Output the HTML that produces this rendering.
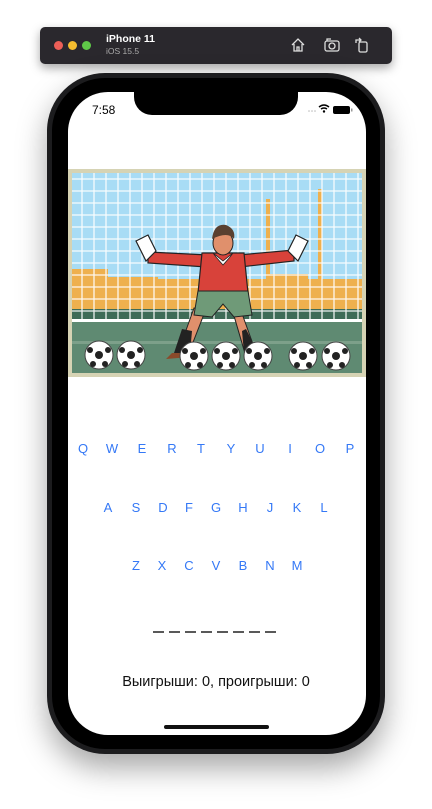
<!DOCTYPE html>
<html><head><meta charset="utf-8"><style>
html,body{margin:0;padding:0;width:432px;height:809px;background:#fff;overflow:hidden;font-family:"Liberation Sans",sans-serif;position:relative}
.tb{position:absolute;left:40px;top:27px;width:352px;height:37px;background:#2a282d;border-radius:5px;box-shadow:0 4px 10px rgba(0,0,0,.35)}
.dot{position:absolute;top:14px;width:9px;height:9px;border-radius:50%}
.phone{position:absolute;left:47px;top:73px;width:338px;height:681px;background:#1c1c1e;border-radius:58px;box-shadow:0 14px 30px rgba(0,0,0,.35)}
.inner{position:absolute;left:5px;top:5px;right:5px;bottom:5px;background:#000;border-radius:53px}
.screen{position:absolute;left:68px;top:92px;width:298px;height:643px;background:#fff;border-radius:40px;overflow:hidden}
.notch{position:absolute;left:134px;top:92px;width:164px;height:23px;background:#000;border-radius:0 0 18px 18px}
.k{position:absolute;color:#3478f6;font-size:13px;width:20px;text-align:center;margin-left:-10px}
</style></head><body>
<div class="tb">
<div class="dot" style="left:14px;background:#ec5f57"></div>
<div class="dot" style="left:28px;background:#f5bd2f"></div>
<div class="dot" style="left:42px;background:#5fc848"></div>
<div style="position:absolute;left:66px;top:6px;color:#fff;font-weight:bold;font-size:10.5px">iPhone 11</div>
<div style="position:absolute;left:66px;top:19px;color:#aaa;font-size:8.5px">iOS 15.5</div>
<svg style="position:absolute;left:250px;top:10px" width="90" height="16" viewBox="0 0 90 16" fill="none" stroke="#ddd" stroke-width="1.3">
<path d="M2 8 L8 2 L14 8 M4 7 V14 H12 V7 M7 14 V10 H9 V14"/>
<rect x="35" y="4" width="14" height="10" rx="2"/><circle cx="42" cy="9" r="3"/><path d="M37 4 V2 H41"/>
<rect x="69" y="5" width="8" height="10" rx="1.5"/><path d="M66 6 V3 H71 M69 1 L71 3 L69 5"/>
</svg>
</div>
<div class="phone"><div class="inner"></div></div>
<div class="screen">
<svg style="position:absolute;left:0;top:77px" width="298" height="208" viewBox="0 0 298 208">
<rect width="298" height="208" fill="#d6d3b4"/>
<rect x="4" y="4" width="290" height="200" fill="#a8dcf5"/>
<path d="M4 100 H40 V108 H90 V110 H200 V105 H240 V110 H294 V150 H4Z" fill="#eeb04e"/>
<rect x="198" y="30" width="4" height="80" fill="#eeb04e"/><rect x="250" y="20" width="4" height="90" fill="#eeb04e"/>
<rect x="4" y="140" width="290" height="12" fill="#3e6b57"/>
<rect x="4" y="150" width="290" height="54" fill="#5f8a72"/>
<rect x="4" y="150" width="290" height="3" fill="#fff"/>
<rect x="4" y="172" width="290" height="3" fill="#7da08a"/>
<g stroke="#fff" stroke-width="1.3" opacity=".9">
<path d="M4 10 H294 M4 22 H294 M4 34 H294 M4 46 H294 M4 58 H294 M4 70 H294 M4 82 H294 M4 94 H294 M4 106 H294 M4 118 H294 M4 130 H294 M4 142 H294"/>
<path d="M14 4V150 M26 4V150 M38 4V150 M50 4V150 M62 4V150 M74 4V150 M86 4V150 M98 4V150 M110 4V150 M122 4V150 M134 4V150 M146 4V150 M158 4V150 M170 4V150 M182 4V150 M194 4V150 M206 4V150 M218 4V150 M230 4V150 M242 4V150 M254 4V150 M266 4V150 M278 4V150 M290 4V150"/>
</g>
<path d="M126 139 L112 178 L122 181 L138 140Z M172 139 L186 178 L176 181 L164 140Z" fill="#e0906c" stroke="#222"/>
<path d="M114 160 L106 184 L122 184 L124 162Z M178 160 L190 184 L176 184 L174 162Z" fill="#222"/>
<path d="M104 184 L122 184 L122 188 L98 190Z M176 184 L194 184 L200 190 L176 188Z" fill="#8a4a2a"/>
<path d="M80 83 L140 86 L138 98 L80 94Z" fill="#d8423a" stroke="#222" stroke-width="1.2"/>
<path d="M226 81 L170 86 L172 98 L226 92Z" fill="#d8423a" stroke="#222" stroke-width="1.2"/>
<path d="M134 84 H176 L180 124 H130Z" fill="#d8423a" stroke="#222" stroke-width="1.2"/>
<path d="M145 84 L155 92 L165 84 L162 88 L155 96 L148 88Z" fill="#fff" stroke="#222" stroke-width=".8"/>
<path d="M130 122 H180 L184 146 L166 148 L155 135 L144 148 L126 146Z" fill="#6f9a78" stroke="#222"/>
<ellipse cx="155" cy="74" rx="10" ry="12" fill="#e0906c" stroke="#222"/>
<path d="M144 70 Q146 54 158 56 Q168 60 166 70 Q160 62 144 70Z" fill="#5a4030"/>
<path d="M68 72 L80 66 L88 82 L78 92Z M240 72 L228 66 L220 82 L230 92Z" fill="#fff" stroke="#222" stroke-width="1.2"/>
<g fill="#fff" stroke="#444">
<circle cx="31" cy="186" r="14"/><circle cx="63" cy="186" r="14"/><circle cx="126" cy="187" r="14"/><circle cx="158" cy="187" r="14"/><circle cx="190" cy="187" r="14"/><circle cx="235" cy="187" r="14"/><circle cx="268" cy="187" r="14"/>
</g>
<g fill="#222">
<g id="p"><circle cx="31" cy="186" r="4"/><circle cx="22" cy="181" r="3"/><circle cx="40" cy="181" r="3"/><circle cx="25" cy="195" r="3"/><circle cx="37" cy="195" r="3"/></g>
<use href="#p" x="32"/><use href="#p" x="95" y="1"/><use href="#p" x="127" y="1"/><use href="#p" x="159" y="1"/><use href="#p" x="204" y="1"/><use href="#p" x="237" y="1"/>
</g>
</svg>
</div>
<div class="notch"></div>
<div style="position:absolute;left:92px;top:103px;font-size:12px;color:#000">7:58</div>
<svg style="position:absolute;left:308px;top:104px" width="48" height="10" viewBox="0 0 48 10">
<g fill="#bbb"><circle cx="1" cy="7" r="0.8"/><circle cx="4" cy="7" r="0.8"/><circle cx="7" cy="7" r="0.8"/></g>
<path d="M11 3 Q16 -1 21 3 M13 5 Q16 3 19 5" stroke="#000" stroke-width="1.5" fill="none"/><circle cx="16" cy="7.5" r="1.2"/>
<rect x="25" y="2" width="17" height="8" rx="2" fill="#000"/><rect x="43" y="4.5" width="1.5" height="3" fill="#999"/>
</svg>
<div class="k" style="left:83px;top:441px">Q</div><div class="k" style="left:112px;top:441px">W</div><div class="k" style="left:142px;top:441px">E</div><div class="k" style="left:172px;top:441px">R</div><div class="k" style="left:201px;top:441px">T</div><div class="k" style="left:231px;top:441px">Y</div><div class="k" style="left:260px;top:441px">U</div><div class="k" style="left:290px;top:441px">I</div><div class="k" style="left:320px;top:441px">O</div><div class="k" style="left:350px;top:441px">P</div>
<div class="k" style="left:108px;top:500px">A</div><div class="k" style="left:136px;top:500px">S</div><div class="k" style="left:163px;top:500px">D</div><div class="k" style="left:189px;top:500px">F</div><div class="k" style="left:216px;top:500px">G</div><div class="k" style="left:243px;top:500px">H</div><div class="k" style="left:270px;top:500px">J</div><div class="k" style="left:297px;top:500px">K</div><div class="k" style="left:324px;top:500px">L</div>
<div class="k" style="left:136px;top:558px">Z</div><div class="k" style="left:162px;top:558px">X</div><div class="k" style="left:189px;top:558px">C</div><div class="k" style="left:216px;top:558px">V</div><div class="k" style="left:243px;top:558px">B</div><div class="k" style="left:270px;top:558px">N</div><div class="k" style="left:297px;top:558px">M</div>
<svg style="position:absolute;left:152px;top:630px" width="128" height="4"><g stroke="#222" stroke-width="1.6"><path d="M1 2H12 M17 2H28 M33 2H44 M49 2H60 M65 2H76 M81 2H92 M97 2H108 M113 2H124"/></g></svg>
<div style="position:absolute;left:0;width:432px;top:674px;text-align:center;font-size:14.5px;color:#111">Выигрыши: 0, проигрыши: 0</div>
<div style="position:absolute;left:164px;top:725px;width:105px;height:4px;border-radius:2px;background:#111"></div>
</body></html>
